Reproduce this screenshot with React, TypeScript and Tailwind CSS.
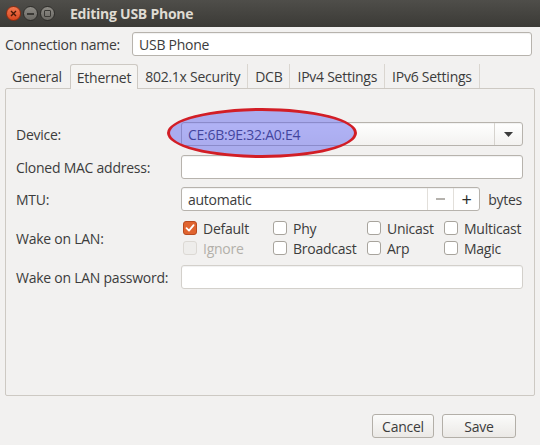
import { useState } from "react";

const font = { fontFamily: '"Open Sans", "Noto Sans", "DejaVu Sans", sans-serif' };

function Checkbox({ label, checked, disabled }: { label: string; checked?: boolean; disabled?: boolean }) {
  return (
    <div className={`flex items-center gap-[6px] h-5 ${disabled ? "text-[#b3b0aa]" : "text-[#3c3c3c]"}`}>
      {checked ? (
        <div className="w-[14px] h-[14px] rounded-[3px] bg-[#e0642f] border border-[#b84a1f] flex items-center justify-center">
          <svg width="10" height="10" viewBox="0 0 10 10">
            <path d="M1.5 5.2 L4 7.6 L8.6 2.2" stroke="white" strokeWidth="1.8" fill="none" strokeLinecap="round" strokeLinejoin="round" />
          </svg>
        </div>
      ) : (
        <div
          className={`w-[14px] h-[14px] rounded-[3px] border ${
            disabled ? "border-[#dcd9d4] bg-[#eeedeb]" : "border-[#a8a49d] bg-white"
          }`}
        />
      )}
      <span>{label}</span>
    </div>
  );
}

function Field({ children, className = "" }: { children?: React.ReactNode; className?: string }) {
  return (
    <div
      className={`h-6 rounded-[3px] border border-[#b7b3ad] bg-white flex items-center shadow-[inset_0_1px_1px_rgba(0,0,0,0.06)] ${className}`}
    >
      {children}
    </div>
  );
}

const tabs = ["General", "Ethernet", "802.1x Security", "DCB", "IPv4 Settings", "IPv6 Settings"];

export default function App() {
  const [active] = useState("Ethernet");

  return (
    <div
      className="w-[540px] h-[445px] bg-[#f2f1f0] text-[14px] tracking-[-0.25px] text-[#3c3c3c] flex flex-col overflow-hidden"
      style={font}
    >
      {/* Title bar */}
      <div className="h-[27px] bg-gradient-to-b from-[#4f4e4a] to-[#3b3a36] flex items-center pl-[6px] shrink-0">
        <div className="w-[15px] h-[15px] rounded-full bg-gradient-to-b from-[#f27850] to-[#d9461c] border border-[#8f2c10] flex items-center justify-center">
          <svg width="7" height="7" viewBox="0 0 7 7">
            <path d="M1 1 L6 6 M6 1 L1 6" stroke="#4a1a08" strokeWidth="1.4" />
          </svg>
        </div>
        <div className="ml-[2px] w-[15px] h-[15px] rounded-full bg-gradient-to-b from-[#8e8c86] to-[#6b6964] border border-[#2e2d2a] flex items-center justify-center">
          <div className="w-[7px] h-[2px] bg-[#3a3935]" />
        </div>
        <div className="ml-[2px] w-[15px] h-[15px] rounded-full bg-gradient-to-b from-[#8e8c86] to-[#6b6964] border border-[#2e2d2a] flex items-center justify-center">
          <div className="w-[7px] h-[7px] border-[1.5px] border-[#3a3935] rounded-[1px]" />
        </div>
        <span className="ml-[15px] font-bold text-[#dfdbd2] text-[14px]">Editing USB Phone</span>
      </div>

      {/* Connection name */}
      <div className="flex items-center mt-[5px] pl-[5px] pr-[8px] shrink-0">
        <span className="w-[127px]">Connection name:</span>
        <Field className="flex-1 pl-[6px]">USB Phone</Field>
      </div>

      {/* Tabs */}
      <div className="flex mt-[8px] px-[5px] h-6 items-end shrink-0">
        <div className="w-[2px]" />
        {tabs.map((t, i) => {
          const isActive = t === active;
          const nextActive = tabs[i + 1] === active;
          return (
            <div
              key={t}
              className={`h-6 flex items-center ${
                isActive
                  ? "bg-[#f5f4f2] border border-b-0 border-[#cdc9c3] rounded-t-[3px] -mb-px z-10 h-[25px] px-[6px]"
                  : `${!nextActive && i !== 0 ? "border-r border-[#dad6d0]" : ""} ${
                      i === 0 ? "pl-[5px] pr-[8px]" : "px-[7px]"
                    }`
              }`}
            >
              {t}
            </div>
          );
        })}
      </div>

      {/* Panel */}
      <div className="mx-[5px] h-[308px] border border-[#cdc9c3] rounded-[2px] bg-[#f2f1f0] flex flex-col pl-[10px] pr-[11px] pt-[33px] shrink-0">
        <div className="flex items-center">
          <span className="w-[165px]">Device:</span>
          <div className="relative flex-1">
            <Field className="pl-[6px] pr-0 bg-gradient-to-b from-white to-[#f3f2f0]">
              <span className="flex-1 text-[#2d2d55]">CE:6B:9E:32:A0:E4</span>
              <div className="w-[28px] h-full border-l border-[#d6d3ce] flex items-center justify-center">
                <svg width="9" height="5" viewBox="0 0 9 5">
                  <path d="M0 0 H9 L4.5 5 Z" fill="#3c3c3c" />
                </svg>
              </div>
            </Field>
            <div className="absolute left-[-14px] top-[-14px] w-[190px] h-[50px] rounded-[50%] border-[3px] border-[#d21e26] bg-[rgba(92,96,236,0.48)]" />
          </div>
        </div>

        <div className="flex items-center mt-[9px]">
          <span className="w-[165px]">Cloned MAC address:</span>
          <Field className="flex-1" />
        </div>

        <div className="flex items-center mt-[8px]">
          <span className="w-[165px]">MTU:</span>
          <Field className="flex-1 pl-[6px]">
            <span className="flex-1">automatic</span>
            <div className="w-[26px] h-full border-l border-[#e2dfda] flex items-center justify-center">
              <div className="w-[9px] h-[1.5px] bg-[#b5b2ad]" />
            </div>
            <div className="w-[26px] h-full border-l border-[#e2dfda] flex items-center justify-center text-[#2c2c2c] text-[18px] leading-none">
              +
            </div>
          </Field>
          <span className="ml-[8px] mr-[1px]">bytes</span>
        </div>

        <div className="flex mt-[7px]">
          <span className="w-[167px] self-center">Wake on LAN:</span>
          <div className="grid grid-cols-[90px_94px_77px_1fr]">
            <Checkbox label="Default" checked />
            <Checkbox label="Phy" />
            <Checkbox label="Unicast" />
            <Checkbox label="Multicast" />
            <Checkbox label="Ignore" disabled />
            <Checkbox label="Broadcast" />
            <Checkbox label="Arp" />
            <Checkbox label="Magic" />
          </div>
        </div>

        <div className="flex items-center mt-[7px]">
          <span className="w-[165px]">Wake on LAN password:</span>
          <Field className="flex-1 bg-[#f6f5f4] border-[#d3d0cb]" />
        </div>
      </div>

      {/* Buttons */}
      <div className="flex justify-end gap-[8px] mt-[18px] pr-[24px]">
        <button className="w-[62px] h-[24px] rounded-[3px] border border-[#b3afa8] bg-gradient-to-b from-[#fbfbfa] to-[#ebe9e6]">
          Cancel
        </button>
        <button className="w-[74px] h-[24px] rounded-[3px] border border-[#b3afa8] bg-gradient-to-b from-[#fbfbfa] to-[#ebe9e6]">
          Save
        </button>
      </div>
    </div>
  );
}
